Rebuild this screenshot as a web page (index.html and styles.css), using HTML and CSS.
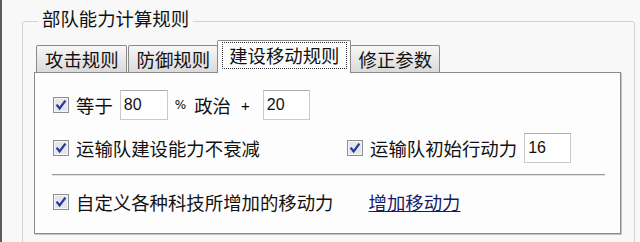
FILE: index.html
```html
<!DOCTYPE html>
<html lang="zh-CN">
<head>
<meta charset="utf-8">
<title>部队能力计算规则</title>
<link rel="stylesheet" href="styles.css">
</head>
<body>
<div class="window">
  <fieldset class="group">
    <legend class="group-title">部队能力计算规则</legend>
    <div class="tabs">
      <div class="tab">攻击规则</div>
      <div class="tab">防御规则</div>
      <div class="tab tab-active"><span class="tab-focus">建设移动规则</span></div>
      <div class="tab">修正参数</div>
    </div>
    <div class="panel">
      <div class="row">
        <label class="check">
          <svg class="cb" viewBox="0 0 16 16" width="16" height="16"><rect x="0.5" y="0.5" width="15" height="15" fill="#f6f6f6" stroke="#8d8e90"/><rect x="2" y="2" width="12" height="12" fill="#e4e6ec"/><path d="M3.6 7.6 L6.6 11.4 L12.4 3.6" fill="none" stroke="#243a9c" stroke-width="2.3"/></svg>
          <span>等于</span>
        </label>
        <input class="num" type="text" value="80">
        <span class="pct">%</span>
        <span>政治</span>
        <span class="op">+</span>
        <input class="num num-gap" type="text" value="20">
      </div>
      <div class="row row-2">
        <label class="check check-wide">
          <svg class="cb" viewBox="0 0 16 16" width="16" height="16"><rect x="0.5" y="0.5" width="15" height="15" fill="#f6f6f6" stroke="#8d8e90"/><rect x="2" y="2" width="12" height="12" fill="#e4e6ec"/><path d="M3.6 7.6 L6.6 11.4 L12.4 3.6" fill="none" stroke="#243a9c" stroke-width="2.3"/></svg>
          <span>运输队建设能力不衰减</span>
        </label>
        <label class="check">
          <svg class="cb" viewBox="0 0 16 16" width="16" height="16"><rect x="0.5" y="0.5" width="15" height="15" fill="#f6f6f6" stroke="#8d8e90"/><rect x="2" y="2" width="12" height="12" fill="#e4e6ec"/><path d="M3.6 7.6 L6.6 11.4 L12.4 3.6" fill="none" stroke="#243a9c" stroke-width="2.3"/></svg>
          <span>运输队初始行动力</span>
        </label>
        <input class="num num-small" type="text" value="16">
      </div>
      <hr class="sep">
      <div class="row row-3">
        <label class="check">
          <svg class="cb" viewBox="0 0 16 16" width="16" height="16"><rect x="0.5" y="0.5" width="15" height="15" fill="#f6f6f6" stroke="#8d8e90"/><rect x="2" y="2" width="12" height="12" fill="#e4e6ec"/><path d="M3.6 7.6 L6.6 11.4 L12.4 3.6" fill="none" stroke="#243a9c" stroke-width="2.3"/></svg>
          <span>自定义各种科技所增加的移动力</span>
        </label>
        <a class="link" href="#">增加移动力</a>
      </div>
    </div>
  </fieldset>
</div>
</body>
</html>
```

FILE: styles.css
```css
html, body {
  margin: 0;
  padding: 0;
}

body {
  width: 640px;
  height: 242px;
  overflow: hidden;
  background: #f8f8f8;
  font-family: "Noto Sans CJK SC", "Noto Sans", sans-serif;
  font-size: 18.4px;
  color: #111;
}

.window {
  height: 242px;
  box-sizing: border-box;
  border-left: 2px solid #5c5c5c;
  padding-top: 5px;
}

.group {
  margin: 0 5px 0 20px;
  padding: 0 13px 14px 11px;
  border: 1px solid #d3d3d3;
  border-radius: 3px;
  min-width: 0;
}

.group-title {
  margin-left: 4px;
  padding: 0 4px 6px;
  line-height: 26px;
}

.tabs {
  display: flex;
  align-items: flex-end;
  gap: 1px;
  margin: 3px 0 0 2px;
}

.tab {
  height: 27px;
  box-sizing: border-box;
  padding: 0 7px 0 8px;
  border: 1px solid #8a8a8a;
  border-bottom: 0;
  border-radius: 2px 2px 0 0;
  background: linear-gradient(#f7f7f7, #dadada);
  line-height: 26px;
  white-space: nowrap;
}

.tab-active {
  height: 33px;
  margin: 0 -2px -1px -2px;
  padding: 1px 3px 0 4px;
  background: #fcfcfc;
  position: relative;
  z-index: 1;
}

.tab-focus {
  display: block;
  border: 1px dotted #333;
  padding: 0 6px;
  line-height: 25px;
}

.panel {
  border: 1px solid #8a8a8a;
  background: #fdfdfd;
  box-shadow: 1px 1px 0 #c6c6c6;
  padding: 17px 14px 16px 18px;
}

.row {
  display: flex;
  align-items: center;
  height: 30px;
  gap: 7px;
}

.row-2 {
  margin-top: 13px;
}

.row-3 {
  margin-top: 11px;
}

.check {
  display: flex;
  align-items: center;
  gap: 7px;
  white-space: nowrap;
}

.check-wide {
  width: 287px;
}

.cb {
  flex: none;
  display: block;
}

.num {
  width: 48px;
  height: 30px;
  box-sizing: border-box;
  margin: 0;
  padding: 0 3px;
  border: 1px solid #cacaca;
  border-top-color: #aeaeae;
  background: #fff;
  font: 16px "Liberation Sans", Arial, sans-serif;
  color: #111;
  outline: none;
}

.num-gap {
  width: 47px;
  margin-left: 6px;
}

.num-small {
  width: 47px;
}

.pct {
  font: 12px "DejaVu Sans", sans-serif;
  color: #000;
  margin-right: 1px;
}

.op {
  font: 15px "Liberation Sans", Arial, sans-serif;
  color: #000;
  margin-left: 3px;
}

.sep {
  margin: 11px 1px 0 -1px;
  height: 0;
  border: 0;
  border-top: 1px solid #9c9c9c;
  border-bottom: 1px solid #e2e2e2;
}

.link {
  margin-left: 28px;
  color: #1a1a66;
  text-decoration: underline;
  white-space: nowrap;
}
```
